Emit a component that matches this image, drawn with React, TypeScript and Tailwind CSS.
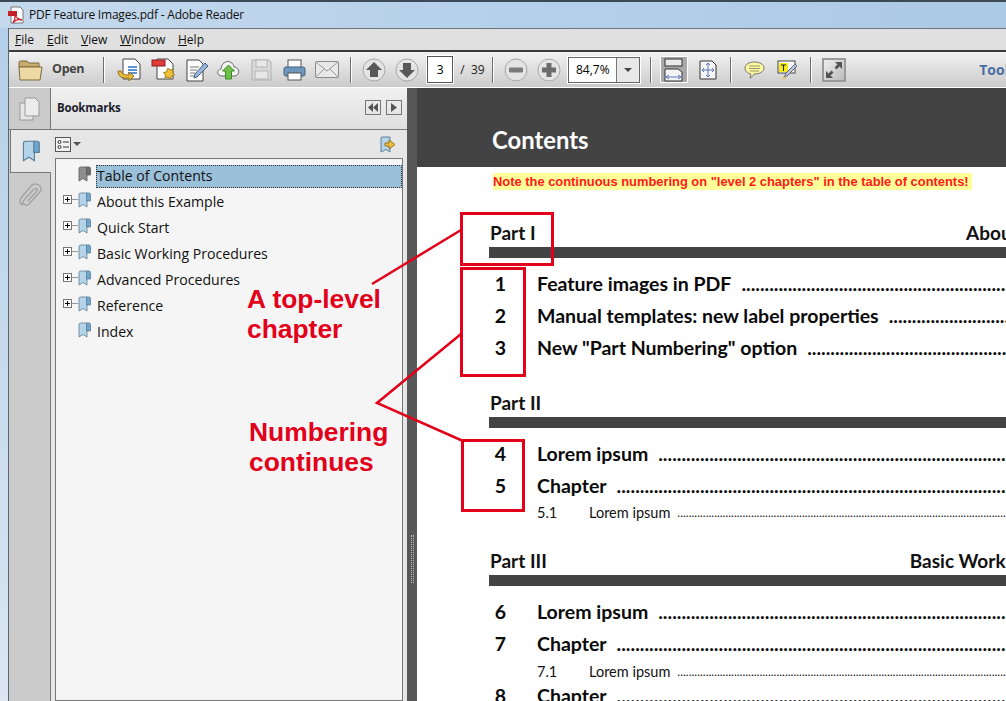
import React from 'react';

const uiFont = "font-['Open_Sans','Noto_Sans',sans-serif]";

const Sep = ({ ml }: { ml: string }) => <div className={`${ml} w-[2px] h-[26px] bg-[#6e6e6e] border-r border-white shrink-0`} />;

const CircleBtn = ({ kind, ml }: { kind: 'up' | 'down' | 'minus' | 'plus'; ml: string }) => (
  <svg width="24" height="24" viewBox="0 0 24 24" className={`${ml} shrink-0`}>
    <circle cx="12" cy="12" r="11" fill="#e4e4e4" stroke="#a8a8a8" />
    {kind === 'up' && <path d="M12 4l8 8h-4v7H8v-7H4z" fill="#585858" />}
    {kind === 'down' && <path d="M12 20l8-8h-4V5H8v7H4z" fill="#585858" />}
    {kind === 'minus' && <rect x="5" y="9.500" width="14" height="5" rx="1" fill="#7c7c7c" />}
    {kind === 'plus' && <path d="M9.500 5h5v4.500H19v5h-4.500V19h-5v-4.500H5v-5h4.500z" fill="#6c6c6c" />}
  </svg>
);

const Bookmark = ({ gray, width = 13, height = 16 }: { gray?: boolean; width?: number; height?: number }) => (
  <svg width={width} height={height} viewBox="0 0 13 16" className="shrink-0">
    <path d="M1 2.500q0-1.500 1.500-1.500H9v14l-4-2.500L1 15z" fill={gray ? '#8f8f8f' : '#b4d4ea'} stroke={gray ? '#5c5c5c' : '#5d7d96'} strokeWidth=".8" />
    <path d="M8.500 1H11q1.500 0 1.500 1.500V9h-4z" fill={gray ? '#6f6f6f' : '#6ea6cc'} stroke={gray ? '#5c5c5c' : '#5d7d96'} strokeWidth=".8" />
  </svg>
);

const treeItems = [
  { label: 'Table of Contents', selected: true },
  { label: 'About this Example', plus: true },
  { label: 'Quick Start', plus: true },
  { label: 'Basic Working Procedures', plus: true },
  { label: 'Advanced Procedures', plus: true },
  { label: 'Reference', plus: true },
  { label: 'Index' },
];

const TreeRow = ({ label, selected, plus }: { label: string; selected?: boolean; plus?: boolean }) => (
  <div className="flex items-center h-[26px]">
    <div className="w-[7px] shrink-0" />
    {plus ? (
      <div className="relative w-[9px] h-[9px] border border-[#777] bg-white shrink-0 -mt-[5px]">
        <div className="absolute left-[1px] top-[3px] w-[5px] h-[1px] bg-black" />
        <div className="absolute left-[3px] top-[1px] w-[1px] h-[5px] bg-black" />
      </div>
    ) : (
      <div className="w-[9px] shrink-0" />
    )}
    <div className={`w-[6px] h-[1px] shrink-0 -mt-[5px] ${plus ? 'bg-[#999]' : ''}`} />
    <div className="-mt-[5px] flex w-[14px] shrink-0">
      <Bookmark gray={selected} />
    </div>
    <div className={`ml-[4px] flex-1 h-[23px] flex items-center text-[14.100px] text-[#111] ${selected ? 'bg-[#9bc0da] border border-dotted border-[#333]' : 'border border-transparent'}`}>
      {label}
    </div>
  </div>
);

const Dots = ({ small }: { small?: boolean }) => (
  <span className={`whitespace-nowrap ${small ? 'ml-[7px] font-normal text-[12px]' : 'ml-[10px]'}`}>{'.'.repeat(200)}</span>
);

const TocRow = ({ num, title }: { num: string; title: string }) => (
  <div className="flex h-[32px] items-center font-bold text-[19.500px] text-[#0a0a0a] whitespace-nowrap">
    <div className="w-[21px] text-center shrink-0 ml-[1px]">{num}</div>
    <div className="ml-[26px]">{title}</div>
    <Dots />
  </div>
);

const SubRow = ({ num, title, mt }: { num: string; title: string; mt?: string }) => (
  <div className={`flex h-[20px] items-center text-[14.500px] text-[#111] whitespace-nowrap ${mt ?? ''}`}>
    <div className="ml-[48px] w-[52px] shrink-0">{num}</div>
    <div>{title}</div>
    <Dots small />
  </div>
);

const PartHead = ({ title, right, mt }: { title: string; right: string; mt: string }) => (
  <div className={mt}>
    <div className="flex justify-between h-[24px] pb-[4px] items-center font-bold text-[19px] text-[#111] whitespace-nowrap px-[1px] w-[643px]">
      <span>{title}</span>
      <span>{right}</span>
    </div>
    <div className="h-[11px] w-[560px] bg-[#434343]" />
  </div>
);

const App: React.FC = () => {
  return (
    <div className={`relative w-[1006px] h-[701px] overflow-hidden bg-[#b4cfe9] ${uiFont}`}>
      {/* title bar */}
      <div className="flex items-center h-[28px] border-t-2 border-[#3c4a58] pl-[8px] bg-gradient-to-r from-[#c5d9ec] via-[#b5d0ea] to-[#acc9e6]">
        <svg width="17" height="18" viewBox="0 0 17 18" className="shrink-0">
          <path d="M3 1h9l3 3v13H3z" fill="#fff" stroke="#777" />
          <path d="M0 5h9v5H0z" fill="#c8202a" />
          <path d="M6 7c2 5 4 6 8 7-4-1-7 0-9 3 2-3 3-6 1-10z" fill="none" stroke="#c8202a" strokeWidth="1.300" />
        </svg>
        <span className="ml-[4px] text-[12px] text-[#111] tracking-[-0.2px]">PDF Feature Images.pdf - Adobe Reader</span>
      </div>

      <div className="flex h-[673px]">
        <div className="w-[8px] shrink-0 bg-gradient-to-b from-[#b4cfe9] to-[#dbe6f1]" />
        <div className="flex-1 flex flex-col border-l border-[#5a6570] min-w-0">
          {/* menu bar */}
          <div className="flex items-center h-[22px] bg-[#e0e0e0] border-t border-[#6b7680] text-[12px] text-[#111] pl-[6px]">
            <span className="w-[32px]"><u>F</u>ile</span>
            <span className="w-[34px]"><u>E</u>dit</span>
            <span className="w-[39px]"><u>V</u>iew</span>
            <span className="w-[58px]"><u>W</u>indow</span>
            <span><u>H</u>elp</span>
          </div>

          {/* toolbar */}
          <div className="flex items-center h-[38px] shrink-0 border-t-2 border-[#3a3a3a] border-b border-b-white bg-gradient-to-b from-[#f2f2f2] to-[#cbcbcb] pl-[9px] overflow-hidden">
            <svg width="25" height="22" viewBox="0 0 25 22" className="shrink-0">
              <path d="M1 4c0-2 1-2 2-2h6l2 2h10v4H1z" fill="#c9ad6c" stroke="#7c6a3c" />
              <path d="M1 8h23l-2 13H2z" fill="#ecd9a4" stroke="#7c6a3c" />
            </svg>
            <span className="ml-[9px] w-[33px] font-bold text-[12.500px] text-[#444] tracking-[-0.3px]">Open</span>
            <Sep ml="ml-[19px]" />
            <svg width="24" height="24" viewBox="0 0 24 24" className="ml-[12px] shrink-0">
              <path d="M6 1h12l5 5v15H6z" fill="#fff" stroke="#444" />
              <path d="M11 9h9M11 12h9M11 15h9" stroke="#2a6fd0" strokeWidth="1.300" />
              <path d="M1 13c0 6 5 8 11 7v3l5-5-5-4v3c-5 0-7-1-8-4z" fill="#e9b93f" stroke="#94701e" />
            </svg>
            <svg width="24" height="24" viewBox="0 0 24 24" className="ml-[10px] shrink-0">
              <path d="M6 1h11l5 5v15H6z" fill="#fff" stroke="#444" />
              <rect x="1" y="2" width="13" height="6" fill="#e33a3a" stroke="#8a2020" />
              <path d="M17 10l2 2 3-.5-.5 3 2 2.500-3 1-1 3-2.500-2-3 1 .5-3-2-2.500 3-.5z" fill="#f2c038" stroke="#a77d18" />
            </svg>
            <svg width="24" height="24" viewBox="0 0 24 24" className="ml-[10px] shrink-0">
              <path d="M2 2h12l4 4v17H2z" fill="#fff" stroke="#444" />
              <path d="M5 9h9M5 12h7M5 15h5M5 18h4" stroke="#777" />
              <path d="M9 20l1-4L20 5l3 3L12 19z" fill="#9ab6d8" stroke="#44607f" />
            </svg>
            <svg width="25" height="21" viewBox="0 0 25 21" className="ml-[7px] shrink-0">
              <path d="M6 17C1 17 0 11 5 10 5 5 10 1 14 3c3 1 4 4 4 5 5 0 7 8 1 9z" fill="#f4f4f4" stroke="#6a6a6a" />
              <path d="M12.500 6l6 6h-3v8h-6v-8h-3z" fill="#6fc04a" stroke="#3e8a25" />
            </svg>
            <svg width="21" height="22" viewBox="0 0 21 22" className="ml-[10px] shrink-0">
              <path d="M1 1h17l2 2v18H1z" fill="#dadada" stroke="#b0b0b0" />
              <rect x="5" y="1" width="11" height="7" fill="#e8e8e8" stroke="#b4b4b4" />
              <rect x="4" y="12" width="13" height="8" fill="#e8e8e8" stroke="#b4b4b4" />
            </svg>
            <svg width="23" height="22" viewBox="0 0 23 22" className="ml-[11px] shrink-0">
              <rect x="5" y="1" width="13" height="8" fill="#fff" stroke="#555" />
              <rect x="1" y="8" width="21" height="9" rx="2" fill="#6f97bd" stroke="#40607f" />
              <rect x="5" y="14" width="13" height="7" fill="#fff" stroke="#555" />
            </svg>
            <svg width="24" height="17" viewBox="0 0 24 17" className="ml-[9px] shrink-0">
              <rect x=".5" y=".5" width="23" height="16" rx="1" fill="#e8e8e8" stroke="#8a8a8a" />
              <path d="M1 1l11 9 11-9M1 16l8-8M23 16l-8-8" fill="none" stroke="#999" />
            </svg>
            <Sep ml="ml-[11px]" />
            <CircleBtn kind="up" ml="ml-[10px]" />
            <CircleBtn kind="down" ml="ml-[9px]" />
            <div className="ml-[8px] w-[26px] h-[27px] shrink-0 bg-white border border-[#555] outline outline-1 outline-white flex items-center justify-center text-[12px] text-black">3</div>
            <span className="ml-[7px] w-[24px] text-[12px] text-[#222] whitespace-nowrap">/ &nbsp;39</span>
            <Sep ml="ml-[8px]" />
            <CircleBtn kind="minus" ml="ml-[10px]" />
            <CircleBtn kind="plus" ml="ml-[9px]" />
            <div className="ml-[7px] flex w-[72px] h-[26px] shrink-0 bg-white border border-[#666] outline outline-1 outline-white text-[12px] text-black">
              <div className="flex-1 flex items-center justify-center">84,7%</div>
              <div className="w-[23px] bg-[#e8e8e8] border-l border-[#777] flex items-center justify-center">
                <div className="w-0 h-0 border-x-[4px] border-x-transparent border-t-[4px] border-t-[#444]" />
              </div>
            </div>
            <Sep ml="ml-[10px]" />
            <div className="ml-[8px] w-[28px] h-[27px] shrink-0 bg-[#a9a9a9] border border-white flex items-center justify-center">
              <svg width="22" height="24" viewBox="0 0 22 24">
                <rect x="2" y="1" width="17" height="7" fill="#e8e8e8" stroke="#333" />
                <path d="M2 11h13l4 3v9H2z" fill="#f4f4f4" stroke="#333" />
                <path d="M3 19h15M3 19l3-2M3 19l3 2M18 19l-3-2M18 19l-3 2" stroke="#5a78b8" fill="none" />
              </svg>
            </div>
            <svg width="18" height="20" viewBox="0 0 18 20" className="ml-[11px] shrink-0">
              <path d="M1 1h12l4 4v14H1z" fill="#f6f6f6" stroke="#333" />
              <path d="M9 3v14M3 10h12M9 3l-2 2M9 3l2 2M9 17l-2-2M9 17l2-2M3 10l2-2M3 10l2 2M15 10l-2-2M15 10l-2 2" stroke="#5a78b8" fill="none" />
            </svg>
            <Sep ml="ml-[13px]" />
            <svg width="21" height="18" viewBox="0 0 21 18" className="ml-[12px] shrink-0">
              <path d="M10 1c5 0 10 2 10 6s-5 6-10 6c-1 2-3 4-4 4l1-4C3 12 1 10 1 7c0-4 5-6 9-6z" fill="#fcf8a0" stroke="#777" />
              <path d="M5 5h11M5 7.500h11M6 10h9" stroke="#9a9a70" />
            </svg>
            <svg width="21" height="20" viewBox="0 0 21 20" className="ml-[12px] shrink-0">
              <rect x="1" y="1" width="17" height="12" fill="#fff" stroke="#444" />
              <rect x="2" y="3" width="9" height="9" fill="#f5ea1c" />
              <path d="M4 5h5M6.500 5v6" stroke="#222" />
              <path d="M7 18l2-5 9-9 2 2-9 9z" fill="#b5c9dc" stroke="#667" />
              <circle cx="7" cy="18" r="1.600" fill="#e3c75c" />
            </svg>
            <Sep ml="ml-[12px]" />
            <div className="ml-[10px] w-[24px] h-[24px] shrink-0 border-2 border-[#9a9a9a] bg-gradient-to-br from-[#efefef] to-[#bbb] flex items-center justify-center">
              <svg width="18" height="18" viewBox="0 0 18 18">
                <path d="M10 1h7v7l-2.500-2.500-3 3-2-2 3-3zM1 10l2.500 2.500 3-3 2 2-3 3L8 17H1z" fill="#555" />
              </svg>
            </div>
            <span className="ml-[133px] font-bold text-[14px] text-[#4a6f9f] whitespace-nowrap">Tools</span>
          </div>

          {/* body */}
          <div className="flex flex-1 min-h-0">
            {/* left tabs */}
            <div className="w-[42px] shrink-0 flex flex-col bg-[#cbcbcb] border-r border-[#777] relative">
              <div className="h-[42px] flex items-center justify-center border-b border-[#777]">
                <svg width="22" height="24" viewBox="0 0 22 24">
                  <rect x="1" y="6" width="13" height="17" fill="#e6e6e6" stroke="#999" />
                  <path d="M6 1h10l4 4v14H6z" fill="#ececec" stroke="#999" />
                </svg>
              </div>
              <div className="h-[43px] ml-[1px] -mr-[1px] bg-[#e8e8e8] border border-r-0 border-[#777] border-t-0 flex items-center justify-center relative z-10">
                <Bookmark width={18} height={24} />
              </div>
              <div className="mt-[10px] flex justify-center">
                <svg width="24" height="25" viewBox="0 0 24 25">
                  <path d="M5 22c-3-1-4-4-2-7L13 3c3-3 7-2 9 0s1 5-1 7L11 21c-2 2-4 1-5 0s-1-3 1-5l9-10c1-1 2-1 3 0s0 2-1 3l-8 9" fill="none" stroke="#a4a4a4" strokeWidth="1.500" />
                </svg>
              </div>
            </div>

            {/* bookmarks panel */}
            <div className="w-[356px] shrink-0 flex flex-col bg-[#e6e6e6]">
              <div className="h-[42px] shrink-0 flex items-center pl-[6px] pr-[5px] pb-[2px] bg-gradient-to-b from-[#f1f1f1] to-[#dfdfdf] border-b border-[#777]">
                <span className="font-bold text-[11.500px] text-[#1c1c2c] tracking-[-0.2px]">Bookmarks</span>
                <div className="ml-auto w-[16px] h-[15px] border border-[#777] flex items-center justify-center">
                  <svg width="10" height="9" viewBox="0 0 10 9"><path d="M5 0v9L0 4.500zM10 0v9L5 4.500z" fill="#555" /></svg>
                </div>
                <div className="ml-[5px] w-[16px] h-[15px] border border-[#777] flex items-center justify-center">
                  <svg width="6" height="9" viewBox="0 0 6 9"><path d="M0 0v9l6-4.500z" fill="#555" /></svg>
                </div>
              </div>
              <div className="h-[28px] shrink-0 flex items-center pl-[4px] pr-[11px]">
                <svg width="16" height="15" viewBox="0 0 16 15">
                  <rect x=".5" y=".5" width="15" height="14" fill="#f2f2f2" stroke="#555" />
                  <circle cx="4.500" cy="5" r="1.500" fill="none" stroke="#333" />
                  <circle cx="4.500" cy="10" r="1.500" fill="none" stroke="#333" />
                  <path d="M8 5h6M8 10h6" stroke="#333" />
                </svg>
                <div className="ml-[2px] w-0 h-0 border-x-[4px] border-x-transparent border-t-[4px] border-t-[#555]" />
                <svg width="16" height="17" viewBox="0 0 16 17" className="ml-auto">
                  <path d="M1 2q0-1 1-1h8v15l-4-2.500L1 16z" fill="#b4d4ea" stroke="#5e7f9a" />
                  <path d="M9 4l6 4.500-6 4.500v-3H5V7h4z" fill="#edbb3c" stroke="#9a741c" />
                </svg>
              </div>
              <div className="flex-1 ml-[4px] mr-[4px] bg-[#f5f5f5] border border-[#777] pt-[4px]">
                {treeItems.map((item) => (
                  <TreeRow key={item.label} {...item} />
                ))}
              </div>
            </div>

            {/* splitter */}
            <div className="w-[10px] shrink-0 bg-[#585858] flex items-center justify-center">
              <div className="w-[3px] h-[48px] mt-[328px] border-x border-dotted border-[#bbb]" />
            </div>

            {/* page */}
            <div className="flex-1 min-w-0 bg-white overflow-hidden font-['Lato','Noto_Sans',sans-serif]">
              <div className="h-[79px] bg-[#434343] flex items-end pl-[75px] pb-[14px]">
                <span className="font-bold text-[23.800px] text-white leading-none">Contents</span>
              </div>
              <div className="mt-[6px] ml-[76px] h-[17px] w-[479px] bg-[#ffff99] flex items-center font-['Liberation_Sans',sans-serif] font-bold text-[12.900px] text-[#ff1a1a] whitespace-nowrap">
                Note the continuous numbering on "level 2 chapters" in the table of contents!
              </div>
              <div className="ml-[72px]">
                <PartHead title="Part I" right="About this Example" mt="mt-[33px]" />
                <div className="mt-[10px]">
                  <TocRow num="1" title="Feature images in PDF" />
                  <TocRow num="2" title="Manual templates: new label properties" />
                  <TocRow num="3" title={'New "Part Numbering" option'} />
                </div>
                <PartHead title="Part II" right="" mt="mt-[29px]" />
                <div className="mt-[10px]">
                  <TocRow num="4" title="Lorem ipsum" />
                  <TocRow num="5" title="Chapter" />
                  <SubRow num="5.1" title="Lorem ipsum" mt="mt-[1px]" />
                </div>
                <PartHead title="Part III" right="Basic Working Procedures" mt="mt-[28px]" />
                <div className="mt-[10px]">
                  <TocRow num="6" title="Lorem ipsum" />
                  <TocRow num="7" title="Chapter" />
                  <SubRow num="7.1" title="Lorem ipsum" mt="mt-[2px]" />
                  <div className="-mt-[2px]">
                    <TocRow num="8" title="Chapter" />
                  </div>
                </div>
              </div>
            </div>
          </div>
        </div>
      </div>

      {/* annotations drawn over the window */}
      <div className="absolute left-[460px] top-[212px] w-[94px] h-[54px] border-[3px] border-[#e2001a]" />
      <div className="absolute left-[460px] top-[267px] w-[66px] h-[110px] border-[3px] border-[#e2001a]" />
      <div className="absolute left-[461px] top-[439px] w-[64px] h-[73px] border-[3px] border-[#e2001a]" />
      <svg className="absolute left-0 top-0" width="1006" height="701" fill="none" stroke="#e2001a" strokeWidth="2.500">
        <path d="M372 284L461 230" />
        <path d="M461 334L377 403L463 441" />
      </svg>
      <div className="absolute left-[247px] top-[284px] font-['Liberation_Sans',sans-serif] font-bold text-[26.400px] leading-[30px] text-[#e2001a]">
        A top-level
        <br />
        chapter
      </div>
      <div className="absolute left-[249px] top-[417px] font-['Liberation_Sans',sans-serif] font-bold text-[26.400px] leading-[30px] text-[#e2001a]">
        Numbering
        <br />
        continues
      </div>
    </div>
  );
};

export default App;
